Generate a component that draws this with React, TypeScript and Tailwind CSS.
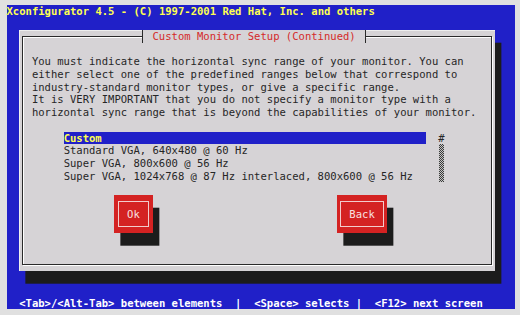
const bodyLines = [
  'You must indicate the horizontal sync range of your monitor. You can',
  'either select one of the predefined ranges below that correspond to',
  'industry-standard monitor types, or give a specific range.',
  'It is VERY IMPORTANT that you do not specify a monitor type with a',
  'horizontal sync range that is beyond the capabilities of your monitor.',
];

const monitorRanges = [
  'Custom',
  'Standard VGA, 640x480 @ 60 Hz',
  'Super VGA, 800x600 @ 56 Hz',
  'Super VGA, 1024x768 @ 87 Hz interlaced, 800x600 @ 56 Hz',
];

interface TermButtonProps {
  label: string;
  widthClass: string;
}

function TermButton({ label, widthClass }: TermButtonProps) {
  return (
    <div
      className={`${widthClass} h-[38.1px] shrink-0 bg-[#d42222] px-[3.2px] py-[6.35px] shadow-[6.35px_12.7px_0_#1c1c1c] flex`}
    >
      <div className="flex-1 border border-[#f2cccc] flex items-center justify-center text-[#f8e0e0]">
        {label}
      </div>
    </div>
  );
}

export default function App() {
  return (
    <div className="w-[520px] h-[315px] overflow-hidden bg-[#e0e0e0] pl-[6.5px] pt-[4.65px]">
      <div className="w-[508px] h-[304.8px] bg-[#2020c8] flex flex-col font-['DejaVu_Sans_Mono',monospace] text-[10.55px] leading-[12.7px] whitespace-pre">
        {/* Title row */}
        <div className="h-[12.7px] text-[#ffff50] font-bold">
          Xconfigurator 4.5 - (C) 1997-2001 Red Hat, Inc. and others
        </div>
        <div className="h-[12.7px]" />

        {/* Dialog window */}
        <div className="ml-[12.7px] w-[476.25px] h-[241.3px] bg-[#d6d3d6] px-[3.2px] py-[6.35px] shadow-[6.35px_12.7px_0_#1c1c1c,inset_1px_1px_0_#eeeeee] text-[#262626]">
          <div className="relative h-full border border-[#2a2a2a] shadow-[inset_1px_1px_0_#ffffff,1px_1px_0_#ffffff] pl-[8.5px] pt-[18.05px]">
            <div className="absolute top-[-7.35px] left-[119.1px] h-[12.7px] bg-[#d6d3d6] border-x border-[#2a2a2a] px-[9.05px] text-[#d42a2a]">
              Custom Monitor Setup (Continued)
            </div>

            {/* Explanation */}
            <div className="flex flex-col">
              {bodyLines.map((line) => (
                <div key={line} className="h-[12.7px]">
                  {line}
                </div>
              ))}
            </div>
            <div className="h-[12.7px]" />

            {/* Range list with scrollbar */}
            <div className="flex ml-[31.75px]">
              <div className="w-[361.95px] flex flex-col">
                {monitorRanges.map((range, i) =>
                  i === 0 ? (
                    <div key={range} className="h-[12.7px] bg-[#2020c8] text-[#ffff50] font-bold">
                      {range}
                    </div>
                  ) : (
                    <div key={range} className="h-[12.7px]">
                      {range}
                    </div>
                  ),
                )}
              </div>
              <div className="ml-[12.7px] w-[6.35px] flex flex-col">
                <div className="h-[12.7px] text-center">#</div>
                <div className="h-[38.1px] mx-[0.5px] bg-[repeating-conic-gradient(#3a3a3a_0_25%,#c4c4c4_0_50%)] bg-[length:2px_2px]" />
              </div>
            </div>
            <div className="h-[12.7px]" />

            {/* Buttons */}
            <div className="flex ml-[82.55px] gap-[184.15px]">
              <TermButton label="Ok" widthClass="w-[38.1px]" />
              <TermButton label="Back" widthClass="w-[50.8px]" />
            </div>
          </div>
        </div>

        <div className="h-[25.4px]" />

        {/* Help line */}
        <div className="h-[12.7px] text-white font-bold">
          {'  <Tab>/<Alt-Tab> between elements  |  <Space> selects |  <F12> next screen'}
        </div>
      </div>
    </div>
  );
}
